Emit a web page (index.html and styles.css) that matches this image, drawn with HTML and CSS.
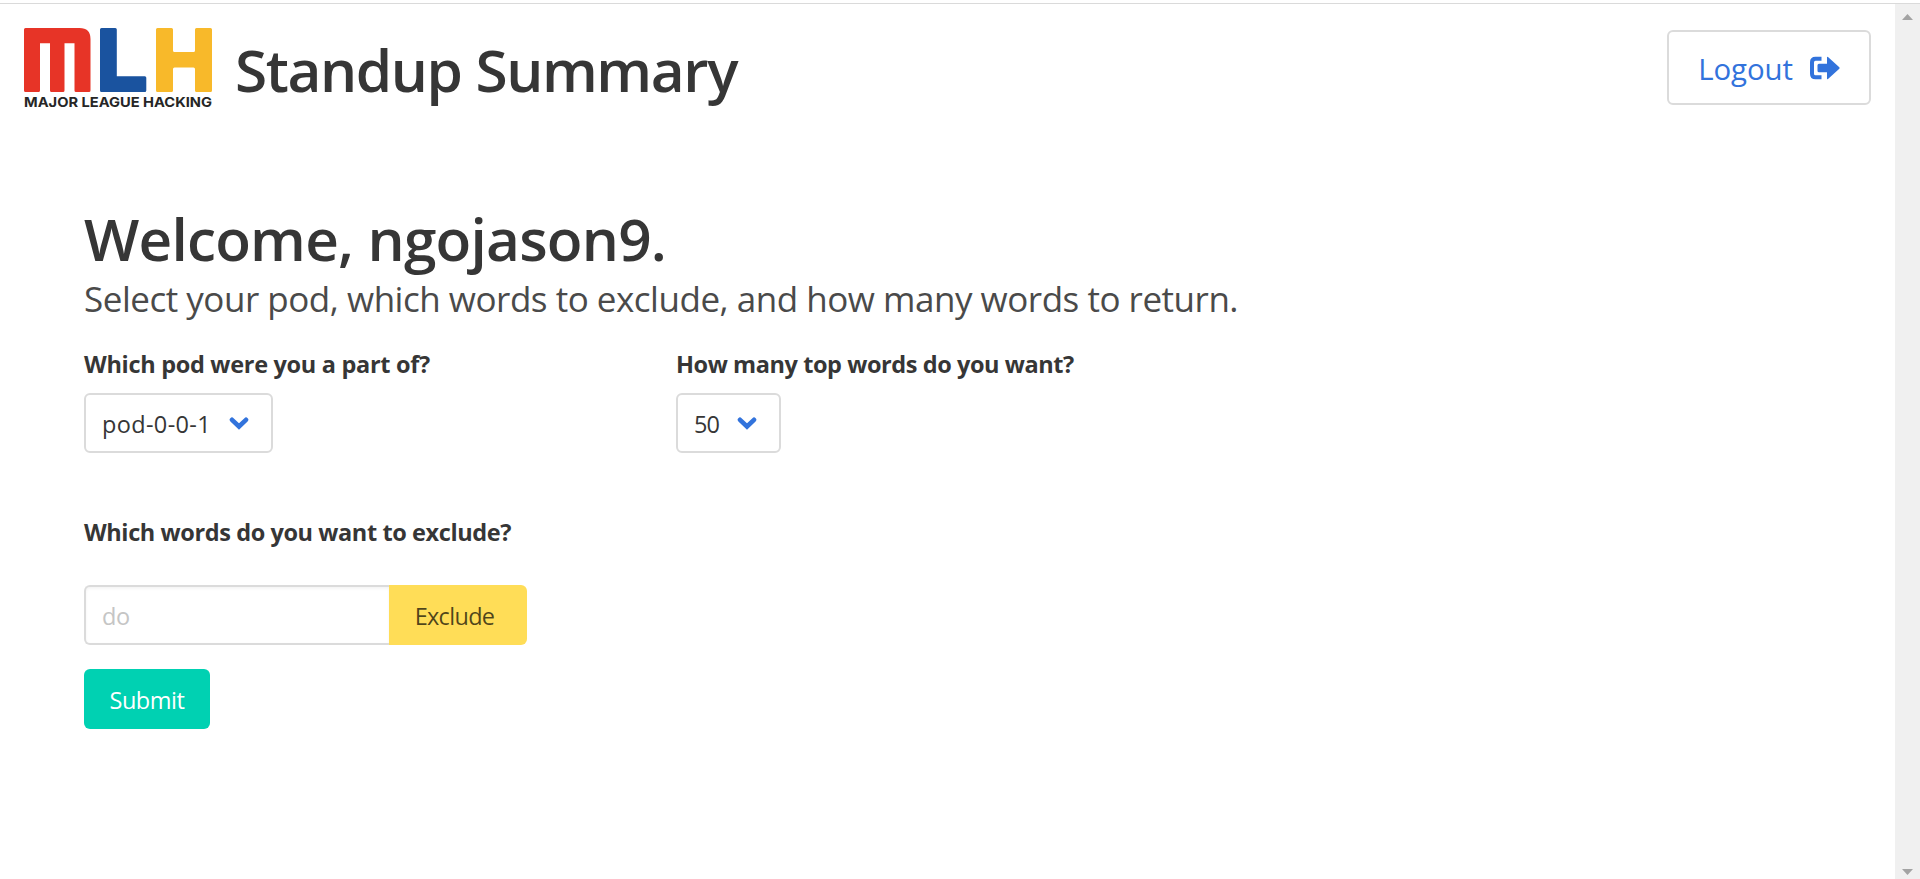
FILE: index.html
```
<!DOCTYPE html>
<html lang="en">
<head>
<meta charset="utf-8">
<title>Standup Summary</title>
<link rel="stylesheet" href="styles.css">
</head>
<body>
<div class="window">
  <div class="page">
    <header class="header">
      <svg class="logo" width="188" height="80" viewBox="0 0 188 80" role="img" aria-label="Major League Hacking">
        <path fill="#e73427" d="M1.500 0H55.500Q66.500 0 66.500 11V62.500Q66.500 64 65 64H52Q50.500 64 50.500 62.500V15.300H40.500V62.500Q40.500 64 39 64H27.500Q26 64 26 62.500V15.300H16V62.500Q16 64 14.500 64H1.500Q0 64 0 62.500V1.500Q0 0 1.500 0Z"/>
        <path fill="#1a539f" d="M77.500 0H91.300Q92.800 0 92.800 1.500V48.300H120.800Q122.300 48.300 122.300 49.800V62.500Q122.300 64 120.800 64H77.500Q76 64 76 62.500V1.500Q76 0 77.500 0Z"/>
        <path fill="#f8b92a" d="M133.500 0H147.500Q149 0 149 1.500V22.500Q149 24 150.500 24H169.500Q171 24 171 22.500V1.500Q171 0 172.500 0H186.500Q188 0 188 1.500V62.500Q188 64 186.500 64H172.500Q171 64 171 62.500V41Q171 39.500 169.500 39.500H150.500Q149 39.500 149 41V62.500Q149 64 147.500 64H133.500Q132 64 132 62.500V1.500Q132 0 133.500 0Z"/>
        <text class="logo-name" x="0" y="78.800" textLength="188" lengthAdjust="spacingAndGlyphs">MAJOR LEAGUE HACKING</text>
      </svg>
      <h1 class="title">Standup Summary</h1>
      <button class="button logout" type="button">
        <span>Logout</span>
        <svg width="30" height="24" viewBox="0 0 30 24" aria-hidden="true">
          <path fill="none" stroke="#3273dc" stroke-width="4" d="M11.500 2.700H5.500Q2 2.700 2 6.200V17.800Q2 21.300 5.500 21.300H11.500"/>
          <path fill="#3273dc" d="M17 1.500Q17 .3 18 .9L29.300 11.200Q30 12 29.300 12.800L18 23.100Q17 23.700 17 22.500V16.300H9Q7.500 16.300 7.500 14.800V9.200Q7.500 7.700 9 7.700H17Z"/>
        </svg>
      </button>
    </header>
    <main class="main">
      <h2 class="welcome">Welcome, ngojason9.</h2>
      <p class="subtitle">Select your pod, which words to exclude, and how many words to return.</p>
      <div class="columns">
        <div class="field">
          <div class="label label-pod">Which pod were you a part of?</div>
          <div class="select select-pod"><span>pod-0-0-1</span>
            <svg width="20" height="14" viewBox="0 0 20 14" aria-hidden="true"><path class="chevron" d="M3 3.800 10 10.500 17 3.800"/></svg>
          </div>
        </div>
        <div class="field">
          <div class="label label-count">How many top words do you want?</div>
          <div class="select select-count"><span>50</span>
            <svg width="20" height="14" viewBox="0 0 20 14" aria-hidden="true"><path class="chevron" d="M3 3.800 10 10.500 17 3.800"/></svg>
          </div>
        </div>
      </div>
      <div class="label label-exclude">Which words do you want to exclude?</div>
      <div class="addons">
        <input class="input" type="text" placeholder="do" aria-label="Word to exclude">
        <button class="button exclude" type="button">Exclude</button>
      </div>
      <button class="button submit" type="button">Submit</button>
    </main>
  </div>
  <div class="scrollbar">
    <svg width="11" height="6" viewBox="0 0 11 6" aria-hidden="true"><path fill="#a3a3a3" d="M5.500 0 11 6H0Z"/></svg>
    <svg width="11" height="6" viewBox="0 0 11 6" aria-hidden="true"><path fill="#a3a3a3" d="M0 0H11L5.500 6Z"/></svg>
  </div>
</div>
</body>
</html>
```
FILE: styles.css
```
* { box-sizing: border-box; margin: 0; }
body {
  background: #fff;
  color: #363636;
  font: 400 23.5px/36px "Open Sans", "Noto Sans", sans-serif;
  padding-top: 3px;
  overflow: hidden;
}
.window { display: flex; height: 876px; border-top: 1px solid #dadada; }
.page { flex: 1; }
.header { display: flex; align-items: center; height: 127px; padding: 0 24px; }
.logo { display: block; overflow: visible; }
.logo-name { font: 700 13.5px Inter, sans-serif; fill: #262626; }
.title {
  margin-left: 23px;
  padding-top: 3px;
  font-size: 58.5px;
  font-weight: 600;
  line-height: 66px;
  letter-spacing: -1.4px;
}
.button {
  display: flex;
  align-items: center;
  justify-content: center;
  height: 60px;
  padding: 2px 0 0;
  border: 0;
  border-radius: 6px;
  font: inherit;
}
.logout {
  gap: 17px;
  width: 204px;
  height: 75px;
  margin-left: auto;
  padding: 0;
  border: 2px solid #dbdbdb;
  background: #fff;
  color: #3273dc;
  font-size: 29.4px;
}
.logout span { padding-top: 2px; letter-spacing: -.1px; }
.main { padding: 74px 84px 0; }
.welcome { font-size: 58.5px; font-weight: 600; line-height: 66px; letter-spacing: -.79px; }
.subtitle { margin-top: 6px; color: #4a4a4a; font-size: 35px; line-height: 44px; letter-spacing: -.48px; }
.columns { display: flex; margin-top: 25px; }
.columns .field { width: 592px; }
.label { font-weight: 700; }
.label-pod { letter-spacing: -.3px; }
.label-count { letter-spacing: -.42px; }
.label-exclude { margin-top: 61px; letter-spacing: -.4px; }
.select {
  display: flex;
  align-items: center;
  justify-content: space-between;
  height: 60px;
  margin-top: 11px;
  padding: 0 22px 0 16px;
  border: 2px solid #dbdbdb;
  border-radius: 6px;
}
.select span { padding-top: 2px; }
.select-pod { width: 189px; letter-spacing: .35px; }
.select-count { width: 105px; letter-spacing: -1px; }
.chevron { fill: none; stroke: #3273dc; stroke-width: 4.6; stroke-linecap: round; }
.addons { display: flex; margin: 35px 0 24px; }
.input {
  width: 305px;
  height: 60px;
  padding: 2px 16px 0;
  border: 2px solid #dbdbdb;
  border-right: 0;
  border-radius: 6px 0 0 6px;
  box-shadow: inset 0 1.5px 3px rgba(10, 10, 10, .05);
  font: inherit;
  letter-spacing: -.5px;
}
.input::placeholder { color: #c5c5c5; opacity: 1; }
.exclude {
  width: 138px;
  border-radius: 0 6px 6px 0;
  background: #ffdd57;
  color: rgba(0, 0, 0, .7);
  letter-spacing: -.69px;
  padding-right: 7px;
}
.submit { width: 126px; background: #00d1b2; color: #fff; letter-spacing: -.44px; }
.scrollbar {
  display: flex;
  flex-direction: column;
  align-items: center;
  justify-content: space-between;
  width: 25px;
  padding: 10px 0 4px;
  background: #f0f0f0;
}
```
